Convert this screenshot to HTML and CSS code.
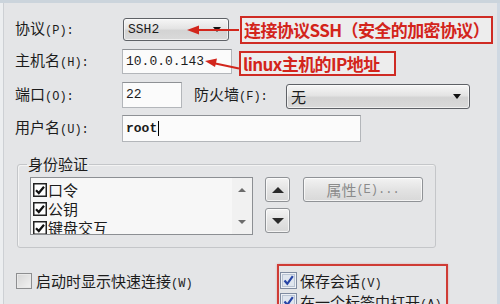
FILE: index.html
```html
<!DOCTYPE html>
<html lang="zh-CN">
<head>
    <meta charset="UTF-8">
    <meta name="viewport" content="width=device-width, initial-scale=1.0">
    <title>快速连接</title>
    <link rel="stylesheet" href="styles.css">
</head>
<body>
    <div class="dialog">
        <div class="form">
            <div class="row row-proto">
                <div class="lbl">协议<span class="key">(P):</span></div>
                <div class="select select-proto">
                    <span class="mono">SSH2</span>
                    <span class="caret"></span>
                </div>
                <div class="note note-proto">连接协议SSH（安全的加密协议）</div>
            </div>

            <div class="row row-host">
                <div class="lbl">主机名<span class="key">(H):</span></div>
                <div class="field field-host"><span class="mono">10.0.0.143</span></div>
                <div class="note note-host">linux主机的IP地址</div>
            </div>

            <div class="row row-port">
                <div class="lbl">端口<span class="key">(O):</span></div>
                <div class="field field-port"><span class="mono">22</span></div>
                <div class="lbl lbl-fw">防火墙<span class="key">(F):</span></div>
                <div class="select select-fw">
                    <span>无</span>
                    <span class="caret"></span>
                </div>
            </div>

            <div class="row row-user">
                <div class="lbl">用户名<span class="key">(U):</span></div>
                <div class="field field-user"><span class="mono bold">root</span><span class="cursor"></span></div>
            </div>

            <fieldset class="group">
                <legend>身份验证</legend>
                <div class="auth">
                    <div class="list">
                        <div class="items">
                            <div class="item">
                                <svg class="tick" width="14" height="14" viewBox="0 0 14 14"><rect x="0.75" y="0.75" width="12.5" height="12.5" fill="#fff" stroke="#222" stroke-width="1.5"/><path d="M3 7.2 L5.8 10 L11 3.8" fill="none" stroke="#111" stroke-width="2.2"/></svg>
                                <span>口令</span>
                            </div>
                            <div class="item">
                                <svg class="tick" width="14" height="14" viewBox="0 0 14 14"><rect x="0.75" y="0.75" width="12.5" height="12.5" fill="#fff" stroke="#222" stroke-width="1.5"/><path d="M3 7.2 L5.8 10 L11 3.8" fill="none" stroke="#111" stroke-width="2.2"/></svg>
                                <span>公钥</span>
                            </div>
                            <div class="item">
                                <svg class="tick" width="14" height="14" viewBox="0 0 14 14"><rect x="0.75" y="0.75" width="12.5" height="12.5" fill="#fff" stroke="#222" stroke-width="1.5"/><path d="M3 7.2 L5.8 10 L11 3.8" fill="none" stroke="#111" stroke-width="2.2"/></svg>
                                <span>键盘交互</span>
                            </div>
                        </div>
                        <div class="scroll">
                            <span class="tri-up small"></span>
                            <span class="tri-down small"></span>
                        </div>
                    </div>
                    <div class="order">
                        <div class="btn btn-sq"><span class="tri-up"></span></div>
                        <div class="btn btn-sq"><span class="tri-down"></span></div>
                    </div>
                    <div class="btn btn-props">属性<span class="key">(E)...</span></div>
                </div>
            </fieldset>

            <div class="bottom">
                <div class="check check-startup">
                    <span class="box"></span>
                    <span>启动时显示快速连接<span class="key">(W)</span></span>
                </div>
                <div class="note-frame">
                    <div class="check">
                        <svg class="box-on" width="17" height="17" viewBox="0 0 17 17"><rect x="0.5" y="0.5" width="16" height="16" fill="#eef1f6" stroke="#7f8ba0"/><rect x="2.5" y="2.5" width="12" height="12" fill="#dfe5ee" stroke="#b9c3d2"/><path d="M4.5 8.5 L7.3 11.8 L12.8 4.2" fill="none" stroke="#2745a6" stroke-width="2.2"/></svg>
                        <span>保存会话<span class="key">(V)</span></span>
                    </div>
                    <div class="check">
                        <svg class="box-on" width="17" height="17" viewBox="0 0 17 17"><rect x="0.5" y="0.5" width="16" height="16" fill="#eef1f6" stroke="#7f8ba0"/><rect x="2.5" y="2.5" width="12" height="12" fill="#dfe5ee" stroke="#b9c3d2"/><path d="M4.5 8.5 L7.3 11.8 L12.8 4.2" fill="none" stroke="#2745a6" stroke-width="2.2"/></svg>
                        <span>在一个标签中打开<span class="key">(A)</span></span>
                    </div>
                </div>
            </div>
        </div>

        <svg class="arrows" width="500" height="304" viewBox="0 0 500 304">
            <line x1="239" y1="30" x2="196" y2="30" stroke="#d2261c" stroke-width="2"/>
            <polygon points="187,30 199,25.5 199,34.5" fill="#d2261c"/>
            <line x1="239" y1="68.5" x2="213" y2="63" stroke="#d2261c" stroke-width="2"/>
            <polygon points="205,61 217,58.5 215,67" fill="#d2261c"/>
        </svg>
    </div>
</body>
</html>
```

FILE: styles.css
```css
body {
    margin: 0;
    padding: 0;
    width: 500px;
    height: 304px;
    overflow: hidden;
    background: #e4e5e7;
    font-family: "Noto Sans CJK SC", sans-serif;
    color: #1c1c1c;
}

.dialog {
    position: relative;
    height: 304px;
    box-shadow: inset 0 3px 0 #cbd4dc, inset 3px 0 0 #eceef0, inset 4px 0 0 #cdd0d4, inset -3px 0 0 #cfd8e2;
    overflow: hidden;
}

.form {
    padding: 15px 0 0 15px;
}

.row {
    display: flex;
    align-items: center;
}

.row-proto { height: 29px; margin-bottom: 3px; }
.row-host { height: 28px; margin-bottom: 6px; }
.row-port { height: 28px; margin-bottom: 6px; }
.row-user { height: 27px; }

.lbl {
    width: 107px;
    flex-shrink: 0;
    font-size: 15px;
    line-height: 18px;
    white-space: nowrap;
}

.key {
    font-family: "Liberation Mono", monospace;
    font-size: 12px;
}

.mono {
    font-family: "Liberation Mono", monospace;
    font-size: 13px;
}

.bold {
    font-weight: bold;
}

.select {
    box-sizing: border-box;
    height: 24px;
    display: flex;
    align-items: center;
    padding: 0 7px 0 4px;
    border: 1px solid #5e6166;
    border-radius: 3px;
    background: linear-gradient(#f6f6f6, #e4e4e4 45%, #d3d3d3 55%, #dadada);
    box-shadow: inset 0 0 0 1px rgba(255, 255, 255, 0.6);
    font-size: 15px;
}

.select-proto {
    width: 106px;
    height: 23px;
    margin-left: 1px;
}

.select-fw {
    width: 184px;
    height: 25px;
    margin-top: 3px;
    padding-right: 8px;
}

.caret {
    margin-left: auto;
    width: 0;
    height: 0;
    border-left: 4px solid transparent;
    border-right: 4px solid transparent;
    border-top: 5px solid #111;
}

.field {
    box-sizing: border-box;
    height: 25px;
    display: flex;
    align-items: center;
    padding: 0 3px;
    background: #fbfbfb;
    border: 1px solid #b3b6ba;
    border-top-color: #8e9195;
}

.field-host { width: 110px; }
.field-port { width: 60px; height: 26px; margin-top: -1px; }
.field-user { width: 239px; height: 27px; }

.lbl-fw {
    width: 92px;
    margin-left: 12px;
}

.cursor {
    width: 1px;
    height: 15px;
    margin-left: 1px;
    background: #000;
}

.note {
    box-sizing: border-box;
    display: flex;
    align-items: center;
    padding: 0 2px;
    border: 2px solid #cf2b24;
    background: #ededed;
    color: #d3241b;
    font-weight: bold;
    font-size: 17px;
    letter-spacing: -0.6px;
    white-space: nowrap;
}

.note-proto {
    width: 253px;
    height: 28px;
    margin-left: 11px;
}

.note-host {
    width: 157px;
    height: 25px;
    margin-left: 7px;
    margin-top: 4px;
}

.group {
    box-sizing: border-box;
    width: 418px;
    margin: 13px 0 0 2px;
    padding: 4px 12px 12px 12px;
    border: 1px solid #c4c6c9;
    border-radius: 3px;
    box-shadow: inset 1px 1px 0 #f3f3f3;
}

.group legend {
    margin-left: -3px;
    padding: 0 1px;
    font-size: 15px;
    line-height: 18px;
}

.auth {
    display: flex;
    align-items: flex-start;
}

.list {
    box-sizing: border-box;
    width: 223px;
    height: 58px;
    display: flex;
    overflow: hidden;
    border: 1px solid #8c8f93;
    background: #f7f7f7;
}

.items {
    flex: 1;
    padding: 2px 0 0 2px;
}

.item {
    height: 19px;
    display: flex;
    align-items: center;
    gap: 1px;
    font-size: 15px;
    white-space: nowrap;
}

.tick {
    flex-shrink: 0;
}

.scroll {
    width: 20px;
    display: flex;
    flex-direction: column;
    justify-content: space-between;
    align-items: center;
    padding: 10px 0 10px;
    background: #f1f1f1;
}

.tri-up,
.tri-down {
    width: 0;
    height: 0;
    border-left: 6px solid transparent;
    border-right: 6px solid transparent;
}

.tri-up { border-bottom: 6px solid #2b2b2b; }
.tri-down { border-top: 6px solid #2b2b2b; }

.tri-up.small { border-width: 0 4px 4px; border-bottom-color: #6c6c6c; }
.tri-down.small { border-width: 4px 4px 0; border-top-color: #6c6c6c; }

.order {
    display: flex;
    flex-direction: column;
    gap: 6px;
    margin-left: 12px;
}

.btn {
    box-sizing: border-box;
    display: flex;
    align-items: center;
    justify-content: center;
    border: 1px solid #8f9296;
    border-radius: 3px;
    background: linear-gradient(#f3f3f3, #e3e3e3 50%, #d8d8d8);
    box-shadow: inset 0 0 0 1px rgba(255, 255, 255, 0.7);
}

.btn-sq {
    width: 25px;
    height: 25px;
}

.btn-props {
    width: 120px;
    height: 25px;
    margin-left: 13px;
    color: #8b8b8b;
    font-size: 15px;
}

.bottom {
    display: flex;
    align-items: flex-start;
    margin-top: 16px;
    padding-left: 1px;
}

.check {
    display: flex;
    align-items: center;
    gap: 3px;
    height: 21px;
    font-size: 15px;
    white-space: nowrap;
}

.check-startup {
    width: 261px;
    flex-shrink: 0;
    margin-top: 6px;
    gap: 4px;
}

.box {
    box-sizing: border-box;
    width: 16px;
    height: 16px;
    border: 1px solid #8d8e90;
    background: linear-gradient(135deg, #d6d6d6, #f2f2f2);
    box-shadow: inset 0 0 0 1px #e9e9e9;
}

.note-frame {
    box-sizing: border-box;
    width: 171px;
    height: 52px;
    padding: 4px 0 0 1px;
    border: 2px solid #cf3b35;
    box-shadow: 0 0 2px rgba(220, 80, 80, 0.4);
}

.box-on {
    flex-shrink: 0;
}

.arrows {
    position: absolute;
    top: 0;
    left: 0;
    pointer-events: none;
}
```
